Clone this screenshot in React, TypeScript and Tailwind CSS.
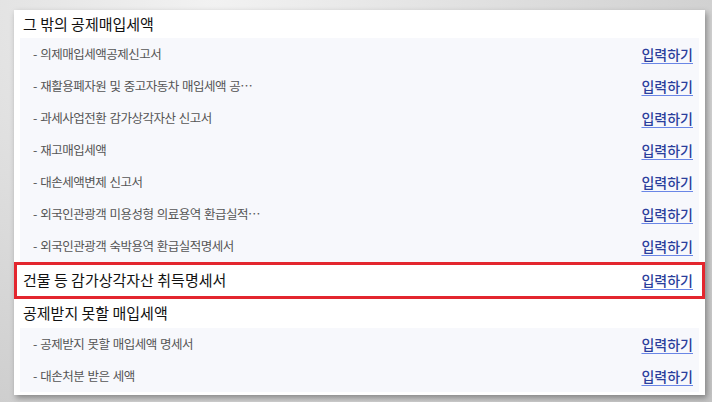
import React from "react";

const font = { fontFamily: '"Noto Sans CJK KR", "Noto Sans", sans-serif' };

function Row({ label }: { label: string }) {
  return (
    <div className="flex h-[32px] items-center justify-between pl-[13px] pr-[6px]">
      <span className="truncate text-[12.5px] tracking-[-0.5px] [word-spacing:1px] text-[#555]">- {label}</span>
      <a className="shrink-0 text-[14px] font-medium text-[#2b3f9c] underline decoration-[#6a86e6] underline-offset-[3px]">
        입력하기
      </a>
    </div>
  );
}

export default function App() {
  const group1 = [
    "의제매입세액공제신고서",
    "재활용폐자원 및 중고자동차 매입세액 공…",
    "과세사업전환 감가상각자산 신고서",
    "재고매입세액",
    "대손세액변제 신고서",
    "외국인관광객 미용성형 의료용역 환급실적…",
    "외국인관광객 숙박용역 환급실적명세서",
  ];
  const group2 = ["공제받지 못할 매입세액 명세서", "대손처분 받은 세액"];
  return (
    <div
      className="h-[402px] w-[712px] overflow-hidden bg-[radial-gradient(ellipse_at_30%_0%,#f2f2f2,#d8d8d8_55%,#c4c4c4)] pl-[14px] pt-[10px]"
      style={font}
    >
      <div className="w-[691px] bg-white shadow-[2px_3px_6px_rgba(0,0,0,0.35)]">
        <div className="flex h-[28px] items-center pl-[9px] text-[15px] text-[#111]">그 밖의 공제매입세액</div>
        <div className="mx-[6px] bg-[#f7f8fc]">
          {group1.map((l) => (
            <Row key={l} label={l} />
          ))}
        </div>
        <div className="flex h-[37px] items-center justify-between border-[3px] border-[#e3262e] pl-[6px] pr-[9px]">
          <span className="text-[15px] text-[#111]">건물 등 감가상각자산 취득명세서</span>
          <a className="text-[14px] font-medium text-[#2b3f9c] underline decoration-[#6a86e6] underline-offset-[3px]">
            입력하기
          </a>
        </div>
        <div className="flex h-[29px] items-center pl-[9px] text-[15px] text-[#111]">공제받지 못할 매입세액</div>
        <div className="mx-[6px] bg-[#f7f8fc]">
          {group2.map((l) => (
            <Row key={l} label={l} />
          ))}
        </div>
        <div className="h-[3px]" />
      </div>
    </div>
  );
}
